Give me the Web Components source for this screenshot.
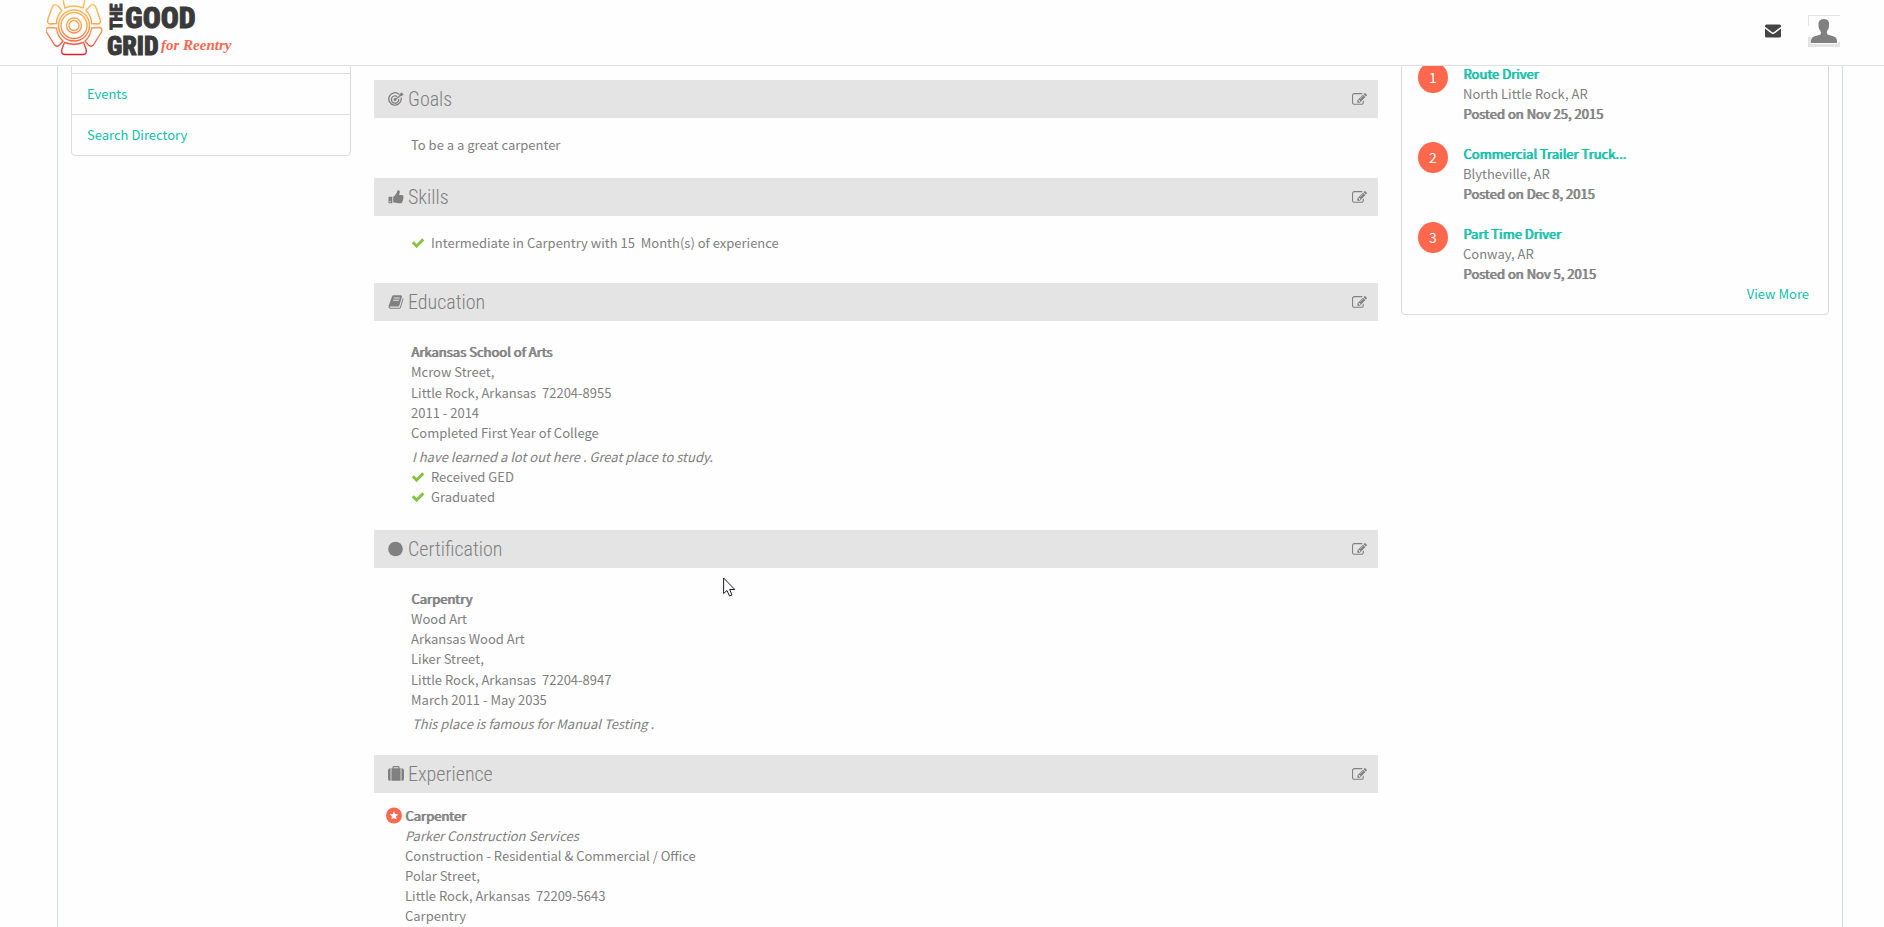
<!DOCTYPE html>
<html lang="en">
<head>
<meta charset="utf-8">
<title>The Good Grid</title>
<style>
  body {
    margin: 0;
    height: 100vh;
    overflow: hidden;
    background: #fefefe;
    color: #808080;
    font-family: "Noto Sans CJK SC", "Open Sans", sans-serif;
    font-size: 13px;
    line-height: 20px;
    --teal: #0fbfa9;
    --coral: #ff684d;
    --line: #dcdcdc;
    --strong: 1px 0 currentColor;
  }
</style>
</head>
<body>
<good-grid-page></good-grid-page>

<script>
const icons = {
  goals: `<svg viewBox="0 0 16 16" fill="none" stroke="currentColor"><path d="M11.3 3.400A6.200 6.200 0 1 0 13.100 6.700" stroke-width="1.300"/><path d="M9.200 5.500A3.700 3.700 0 1 0 10.700 7.800" stroke-width="1.300"/><circle cx="7" cy="8.500" r="1.500" fill="currentColor" stroke="none"/><path d="M7 8.500L14 3.500" stroke-width="1.200"/><path d="M11.300 5l.3-2L14 1.200l.4 1.500 1.600.3-2.200 2z" fill="currentColor" stroke="none"/></svg>`,
  skills: `<svg viewBox="0 0 16 16" fill="currentColor"><path fill-rule="evenodd" d="M.5 7.8h3.800v6.500H.5zM1.500 12v1.200h1.200V12z"/><path d="M5.200 7.700C6.900 6.900 7.800 5.100 8.500 4c.7-.9.6-2.700 1.700-2.700 1.500 0 1.900 1.400 1.500 2.700l-.6 1.900h3c1.200 0 1.800 1.200 1.100 2.100.5.7.4 1.500-.2 2 .3.8.1 1.400-.5 1.900.1 1.500-.9 2.300-2.300 2.300-2.800 0-4.200-.3-5.500-.8H5.200z"/></svg>`,
  education: `<svg viewBox="0 0 1792 1792" fill="currentColor"><path d="M1703 478q40 57 18 129l-275 906q-19 64-76.500 107.500t-122.500 43.500h-923q-77 0-148.500-53.500t-99.500-131.500q-24-67-2-127 0-4 3-27t4-37q1-8-3-21.500t-3-19.500q2-11 8-21t16.500-23.500 16.500-23.500q23-38 45-91.500t30-91.500q3-10 .5-30t-.5-28q3-11 17-28t17-23q21-36 42-92t25-90q1-9-2.500-32t.5-28q4-13 22-30.500t22-22.500q19-26 42.500-84.500t27.500-96.500q1-8-3-25.500t-2-26.500q2-8 9-18t18-23 17-21q8-12 16.500-30.500t15-35 16-36 19.500-32 26.500-23.500 36-11.500 47.500 5.500l-1 3q38-9 51-9h761q74 0 114 56t18 130l-274 906q-36 119-71.500 153.500t-128.500 34.500h-869q-27 0-38 15-11 16-1 43 24 70 144 70h923q29 0 56-15.500t35-41.500l300-987q7-22 5-57 38 15 59 43zm-1064 2q-4 13 2 22.500t20 9.500h608q13 0 25.500-9.500t16.500-22.500l21-64q4-13-2-22.500t-20-9.500h-608q-13 0-25.500 9.500t-16.500 22.500zm-83 256q-4 13 2 22.500t20 9.500h608q13 0 25.500-9.500t16.500-22.500l21-64q4-13-2-22.500t-20-9.500h-608q-13 0-25.500 9.500t-16.500 22.500z"/></svg>`,
  certification: `<svg viewBox="0 0 16 16"><circle cx="7.500" cy="8" r="7.300" fill="currentColor"/></svg>`,
  experience: `<svg viewBox="0 0 1792 1792" fill="currentColor"><path d="M640 256h512v-128h-512v128zm-352 0v1408h-64q-92 0-158-66t-66-158v-960q0-92 66-158t158-66h64zm1120 0v1408h-1024v-1408h128v-160q0-40 28-68t68-28h576q40 0 68 28t28 68v160h128zm384 224v960q0 92-66 158t-158 66h-64v-1408h64q92 0 158 66t66 158z"/></svg>`,
  edit: `<svg viewBox="0 0 1792 1792" fill="currentColor"><path d="M888 1184l116-116-152-152-116 116v56h96v96h56zm440-720q-16-16-33 1l-350 350q-17 17-1 33t33-1l350-350q17-17 1-33zm80 594v190q0 119-84.500 203.500t-203.500 84.500h-832q-119 0-203.500-84.500t-84.500-203.500v-832q0-119 84.500-203.500t203.500-84.500h832q63 0 117 25 15 7 18 23 3 17-9 29l-49 49q-14 14-32 8-23-6-45-6h-832q-66 0-113 47t-47 113v832q0 66 47 113t113 47h832q66 0 113-47t47-113v-126q0-13 9-22l64-64q15-15 35-7t20 29zm-96-738l288 288-672 672h-288v-288zm444 132l-92 92-288-288 92-92q28-28 68-28t68 28l152 152q28 28 28 68t-28 68z"/></svg>`,
  check: `<svg viewBox="0 0 1792 1792" fill="currentColor"><path d="M1671 566q0 40-28 68l-724 724-136 136q-28 28-68 28t-68-28l-136-136-362-362q-28-28-28-68t28-68l136-136q28-28 68-28t68 28l294 295 656-657q28-28 68-28t68 28l136 136q28 28 28 68z"/></svg>`
};

// Base class: opens a shadow root and fills it
class GridElement extends HTMLElement {
  render(html) {
    this.attachShadow({ mode: "open" }).innerHTML = html;
  }
}

// Logo
class SiteLogo extends GridElement {
  constructor() {
    super();
    this.render(`
      <style>
        :host { display: block; }
        a { display: block; }
        svg { display: block; }
        .word { font-family: "Roboto Condensed", "Liberation Sans", sans-serif; font-weight: 800; fill: #3a3a3a; stroke: #3a3a3a; }
        .script { font-family: "Liberation Serif", serif; font-style: italic; font-weight: bold; font-size: 15px; fill: #ff6550; }
      </style>
      <a href="#" aria-label="The Good Grid for Reentry">
        <svg width="190" height="65" viewBox="0 0 190 65">
          <defs>
            <linearGradient id="sun" gradientUnits="userSpaceOnUse" x1="0" y1="0" x2="0" y2="55">
              <stop offset="0" stop-color="#fdc15c"/>
              <stop offset="0.500" stop-color="#fba04f"/>
              <stop offset="0.750" stop-color="#f5694c"/>
              <stop offset="1" stop-color="#e01b35"/>
            </linearGradient>
          </defs>
          <g fill="none" stroke="url(#sun)" stroke-width="1.400">
            <circle cx="28" cy="25.500" r="5"/>
            <circle cx="28" cy="25.500" r="7.500"/>
            <circle cx="28" cy="25.500" r="13"/>
            <circle cx="28" cy="25.500" r="15.500"/>
            <path d="M19 8L17.500 2Q17-2 21-2H35Q39-2 38.500 2L37 8Q28 4 19 8Z"/>
            <path d="M16 10.500L12 6Q9 3 6.500 6.500L2 19Q.5 23.500 4 24L10.500 23.500Q10.500 16 16 10.500Z"/>
            <path d="M40 10.500L44 6Q47 3 49.500 6.500L54 19Q55.500 23.500 52 24L45.500 23.500Q45.500 16 40 10.500Z"/>
            <path d="M10.500 28L3.500 27.500Q-1 27.500.5 32L8 44Q10.500 48 13.500 45L17 41Q11.500 36.500 10.500 28Z"/>
            <path d="M45.500 28L52.500 27.500Q57 27.500 55.500 32L48 44Q45.500 48 42.500 45L39 41Q44.500 36.500 45.500 28Z"/>
            <path d="M18.500 42.500L16 49Q14.500 54.500 19 54.500H37Q41.500 54.500 40 49L37.500 42.500Q28 46 18.500 42.500Z"/>
          </g>
          <g class="word">
            <text transform="translate(76 30) rotate(-90)" font-size="16">THE</text>
            <text x="79" y="28" font-size="30">GOOD</text>
            <text x="61" y="55" font-size="26">GRID</text>
          </g>
          <text class="script" x="115" y="50">for Reentry</text>
        </svg>
      </a>
    `);
  }
}

// Top bar, stays above the scrolled profile
class SiteHeader extends GridElement {
  constructor() {
    super();
    this.render(`
      <style>
        :host { position: fixed; top: 0; left: 0; right: 0; z-index: 2; display: block; background: #fefefe; border-bottom: 1px solid #e0e0e0; }
        header { display: flex; align-items: center; justify-content: space-between; height: 65px; padding: 0 44px 0 46px; }
        nav { display: flex; align-items: center; gap: 27px; padding-bottom: 4px; }
        button { display: block; border: 0; padding: 0; background: none; cursor: pointer; }
        svg { display: block; }
      </style>
      <header>
        <slot></slot>
        <nav>
          <button aria-label="Messages">
            <svg width="16" height="14" viewBox="0 0 16 14"><rect y="0.500" width="16" height="13" rx="1.500" fill="#444"/><path d="M0 3.500L6.500 8.600Q8 9.800 9.500 8.600L16 3.500" fill="none" stroke="#fefefe" stroke-width="1.400"/></svg>
          </button>
          <button aria-label="Profile">
            <svg width="32" height="32" viewBox="0 0 32 32"><path d="M.5 11V.5H32" fill="none" stroke="#e4e4e4"/><path d="M0 22v10h32V27h-2v2H3v-7z" fill="#e4e4e4"/><path d="M3 28Q2.500 22.500 6 21.500L12.500 19.500Q13.500 18 12.500 16Q10.500 14 10.500 11Q9.500 4 16 4Q22 4 21 11Q21 14 19 16Q18.500 18 19.500 19.500L26 21.500Q29.500 22.500 29 28Z" fill="#808080"/></svg>
          </button>
        </nav>
      </header>
    `);
  }
}

// Left menu
class SideMenu extends GridElement {
  constructor() {
    super();
    this.render(`
      <style>
        :host { display: block; border: 1px solid var(--line); border-radius: 4px; }
        ul { list-style: none; margin: 0; padding: 0; }
        li { min-height: 40px; }
        li + li { border-top: 1px solid var(--line); }
        a { display: block; padding: 10px 15px; color: var(--teal); text-decoration: none; }
      </style>
      <ul>
        <li></li>
        <li><a href="#">Events</a></li>
        <li><a href="#">Search Directory</a></li>
      </ul>
    `);
  }
}

// Grey titled block of the profile
class ProfileSection extends GridElement {
  connectedCallback() {
    const title = this.getAttribute("title-text");
    this.render(`
      <style>
        :host { display: block; }
        .bar { display: flex; align-items: center; justify-content: space-between; height: 38px; padding: 0 11px 0 14px; background: #e4e4e4; }
        h2 { display: flex; align-items: center; gap: 4px; margin: 0; font: 300 20px/38px "Roboto Condensed", "Liberation Sans Narrow", sans-serif; }
        h2 svg { width: 16px; height: 16px; }
        button { border: 0; padding: 0; background: none; color: inherit; cursor: pointer; }
        button svg { display: block; width: 15px; height: 15px; }
        .body { padding: 17px 37px 23px; }
        :host([name="skills"]) .body { padding-bottom: 30px; }
        :host([name="education"]) .body { padding-top: 21px; }
        :host([name="certification"]) .body { padding-top: 21px; padding-bottom: 21px; }
        :host([name="experience"]) .body { padding: 13px 12px; }
      </style>
      <section>
        <div class="bar">
          <h2>${icons[this.getAttribute("name")]}<span>${title}</span></h2>
          <button aria-label="Edit ${title}">${icons.edit}</button>
        </div>
        <div class="body"><slot></slot></div>
      </section>
    `);
  }
}

// One line of a profile entry. kind: strong, city, note, em or check
class ProfileLine extends GridElement {
  connectedCallback() {
    this.render(`
      <style>
        :host { display: block; white-space: pre; }
        :host([kind="strong"]) { text-shadow: var(--strong); }
        :host([kind="em"]), :host([kind="note"]) { font-style: italic; }
        :host([kind="city"]) { padding-top: 1px; }
        :host([kind="note"]) { padding: 4px 0 0 1px; }
        :host([kind="check"]) { display: flex; align-items: center; gap: 6px; }
        svg { width: 14px; height: 14px; color: #85c441; }
      </style>${this.getAttribute("kind") === "check" ? icons.check : ""}<slot></slot>
    `.trim());
  }
}

// Work entry with a star in front
class JobEntry extends GridElement {
  constructor() {
    super();
    this.render(`
      <style>
        :host { display: flex; gap: 3px; }
        svg { flex: none; width: 16px; height: 20px; }
      </style>
      <svg viewBox="0 0 16 20"><circle cx="8" cy="9.500" r="8" fill="#ff684d"/><path d="M8 5.300l1.300 2.700 3 .4-2.200 2.100.5 3L8 12.100l-2.600 1.400.5-3-2.200-2.100 3-.4z" fill="#fff"/></svg>
      <div><slot></slot></div>
    `);
  }
}

// Numbered job in the right card
class JobPosting extends GridElement {
  connectedCallback() {
    this.render(`
      <style>
        :host { display: flex; gap: 15px; }
        .num { flex: none; width: 30px; height: 31px; border-radius: 50%; background: var(--coral); color: #fff; font-size: 14px; line-height: 31px; text-align: center; }
        .text { padding-top: 2px; }
        a { color: var(--teal); text-shadow: var(--strong); text-decoration: none; }
        p { margin: 0; }
        .date { text-shadow: var(--strong); }
      </style>
      <div class="num">${this.getAttribute("number")}</div>
      <div class="text">
        <a href="#"><slot></slot></a>
        <p>${this.getAttribute("place")}</p>
        <p class="date">Posted on ${this.getAttribute("date")}</p>
      </div>
    `);
  }
}

class JobCard extends GridElement {
  constructor() {
    super();
    this.render(`
      <style>
        :host { display: block; padding: 15px 19px 10px 16px; border: 1px solid var(--line); border-radius: 4px; }
        .list { display: grid; gap: 18px; padding-top: 6px; }
        .more { display: block; text-align: right; color: var(--teal); text-decoration: none; }
      </style>
      <div class="list"><slot></slot></div>
      <a class="more" href="#">View More</a>
    `);
  }
}

class MousePointer extends GridElement {
  constructor() {
    super();
    this.render(`
      <style>
        :host { position: absolute; left: 723px; top: 577px; z-index: 3; pointer-events: none; }
        svg { display: block; }
      </style>
      <svg width="13" height="20" viewBox="0 0 13 20"><path d="M.6 1V16.500L4 13.500L6.500 19L9 18L6.700 12.500H11.800Z" fill="#fff" stroke="#1c1c2c"/></svg>
    `);
  }
}

class GoodGridPage extends GridElement {
  constructor() {
    super();
    this.render(`
      <style>
        :host { display: block; }
        main { display: grid; grid-template-columns: 280px minmax(0, 1fr) 428px; gap: 23px; align-items: start; min-height: 100vh; box-sizing: border-box; margin: 0 41px 0 57px; padding: 0 13px; border: solid #d5dde0; border-width: 0 1px; }
        side-menu { margin-top: 32px; }
        .profile { padding-top: 80px; }
        job-card { margin-top: 40px; }
      </style>
      <site-header><site-logo></site-logo></site-header>
      <main>
        <side-menu></side-menu>
        <div class="profile">
          <profile-section name="goals" title-text="Goals">
            <profile-line>To be a a great carpenter</profile-line>
          </profile-section>
          <profile-section name="skills" title-text="Skills">
            <profile-line kind="check">Intermediate in Carpentry with 15&nbsp; Month(s) of experience</profile-line>
          </profile-section>
          <profile-section name="education" title-text="Education">
            <profile-line kind="strong">Arkansas School of Arts</profile-line>
            <profile-line>Mcrow Street,</profile-line>
            <profile-line kind="city">Little Rock, Arkansas&nbsp; 72204-8955</profile-line>
            <profile-line>2011 - 2014</profile-line>
            <profile-line>Completed First Year of College</profile-line>
            <profile-line kind="note">I have learned a lot out here . Great place to study.</profile-line>
            <profile-line kind="check">Received GED</profile-line>
            <profile-line kind="check">Graduated</profile-line>
          </profile-section>
          <profile-section name="certification" title-text="Certification">
            <profile-line kind="strong">Carpentry</profile-line>
            <profile-line>Wood Art</profile-line>
            <profile-line>Arkansas Wood Art</profile-line>
            <profile-line>Liker Street,</profile-line>
            <profile-line kind="city">Little Rock, Arkansas&nbsp; 72204-8947</profile-line>
            <profile-line>March 2011 - May 2035</profile-line>
            <profile-line kind="note">This place is famous for Manual Testing .</profile-line>
          </profile-section>
          <profile-section name="experience" title-text="Experience">
            <job-entry>
              <profile-line kind="strong">Carpenter</profile-line>
              <profile-line kind="em">Parker Construction Services</profile-line>
              <profile-line>Construction - Residential &amp; Commercial / Office</profile-line>
              <profile-line>Polar Street,</profile-line>
              <profile-line>Little Rock, Arkansas&nbsp; 72209-5643</profile-line>
              <profile-line>Carpentry</profile-line>
            </job-entry>
          </profile-section>
        </div>
        <job-card>
          <job-posting number="1" place="North Little Rock, AR" date="Nov 25, 2015">Route Driver</job-posting>
          <job-posting number="2" place="Blytheville, AR" date="Dec 8, 2015">Commercial Trailer Truck...</job-posting>
          <job-posting number="3" place="Conway, AR" date="Nov 5, 2015">Part Time Driver</job-posting>
        </job-card>
      </main>
      <mouse-pointer></mouse-pointer>
    `);
  }
}

customElements.define("site-logo", SiteLogo);
customElements.define("site-header", SiteHeader);
customElements.define("side-menu", SideMenu);
customElements.define("profile-section", ProfileSection);
customElements.define("profile-line", ProfileLine);
customElements.define("job-entry", JobEntry);
customElements.define("job-posting", JobPosting);
customElements.define("job-card", JobCard);
customElements.define("mouse-pointer", MousePointer);
customElements.define("good-grid-page", GoodGridPage);
</script>
</body>
</html>
